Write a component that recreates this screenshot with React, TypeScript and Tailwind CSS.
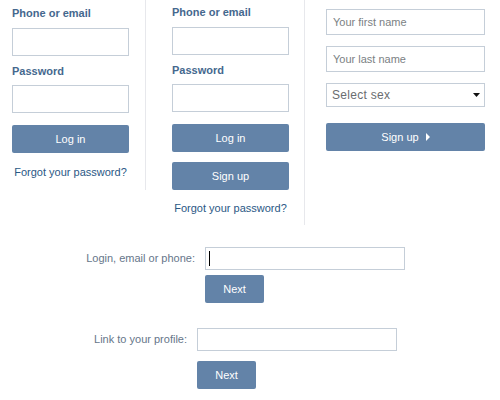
import React from "react";

const font = { fontFamily: '"Liberation Sans", Arial, sans-serif' };

function Label({ children }: { children: React.ReactNode }) {
	return <div className="h-[14px] text-[11px] font-bold leading-[14px] text-[#45688e]">{children}</div>;
}

function Field({ className = "" }: { className?: string }) {
	return <input className={`block h-[28px] w-[117px] border border-[#c5ced8] bg-white outline-none ${className}`} />;
}

function Button({ children, className = "" }: { children: React.ReactNode; className?: string }) {
	return (
		<button
			className={`flex h-[28px] items-center justify-center rounded-[2px] bg-[#6383a8] text-[11px] text-white ${className}`}
		>
			{children}
		</button>
	);
}

function Forgot({ className = "" }: { className?: string }) {
	return (
		<a className={`block h-[14px] text-center text-[11px] leading-[14px] text-[#2a5885] ${className}`}>
			Forgot your password?
		</a>
	);
}

export default function App() {
	return (
		<div className="h-[400px] w-[500px] bg-white" style={font}>
			{/* top forms */}
			<div className="flex items-start">
				<div className="w-[146px] self-start border-r border-[#e7e8ec] pb-[11px] pl-[12px] pt-[6px]">
					<Label>Phone or email</Label>
					<Field className="mt-[8px]" />
					<div className="mt-[8px]">
						<Label>Password</Label>
					</div>
					<Field className="mt-[7px]" />
					<Button className="mt-[12px] w-[117px]">Log in</Button>
					<Forgot className="mt-[12px] w-[117px]" />
				</div>

				<div className="w-[159px] self-start border-r border-[#e7e8ec] pb-[10px] pl-[26px] pt-[5px]">
					<Label>Phone or email</Label>
					<Field className="mt-[8px]" />
					<div className="mt-[8px]">
						<Label>Password</Label>
					</div>
					<Field className="mt-[7px]" />
					<Button className="mt-[12px] w-[117px]">Log in</Button>
					<Button className="mt-[10px] w-[117px]">Sign up</Button>
					<Forgot className="mt-[11px] w-[117px]" />
				</div>

				<div className="flex w-[181px] flex-col pl-[21px] pt-[9px]">
					<input
						placeholder="Your first name"
						className="block h-[26px] w-[159px] border border-[#c5ced8] px-[6px] text-[11px] text-[#333] outline-none placeholder:text-[#7b7f84]"
					/>
					<input
						placeholder="Your last name"
						className="mt-[11px] block h-[26px] w-[159px] border border-[#c5ced8] px-[6px] text-[11px] text-[#333] outline-none placeholder:text-[#7b7f84]"
					/>
					<div className="mt-[11px] flex h-[24px] w-[159px] items-center justify-between border border-[#c5ced8] pl-[5px] pr-[4px]">
						<span className="text-[12px] tracking-[0.3px] text-[#6a6d70]">Select sex</span>
						<svg width="7" height="4" viewBox="0 0 7 4">
							<path d="M0 0H7L3.5 4Z" fill="#111" />
						</svg>
					</div>
					<Button className="mt-[16px] w-[159px] gap-[7px]">
						<span>Sign up</span>
						<svg width="4" height="8" viewBox="0 0 4 8">
							<path d="M0 0L4 4L0 8Z" fill="#fff" />
						</svg>
					</Button>
				</div>
			</div>

			{/* restore forms */}
			<div className="mt-[22px] flex items-start">
				<div className="flex h-[23px] w-[195px] items-center justify-end text-[11px] text-[#66768a]">
					Login, email or phone:
				</div>
				<div className="ml-[10px] flex flex-col gap-[5px]">
					<div className="relative">
						<input className="block h-[23px] w-[200px] border border-[#c5ced8] outline-none" />
						<span className="absolute left-[4px] top-[4px] h-[15px] w-px bg-black" />
					</div>
					<Button className="h-[26px] w-[59px]">Next</Button>
				</div>
			</div>

			<div className="mt-[25px] flex items-start">
				<div className="flex h-[23px] w-[187px] items-center justify-end text-[11px] text-[#66768a]">
					Link to your profile:
				</div>
				<div className="ml-[10px] flex flex-col gap-[10px]">
					<input className="block h-[23px] w-[200px] border border-[#c5ced8] outline-none" />
					<Button className="h-[26px] w-[59px]">Next</Button>
				</div>
			</div>
		</div>
	);
}
